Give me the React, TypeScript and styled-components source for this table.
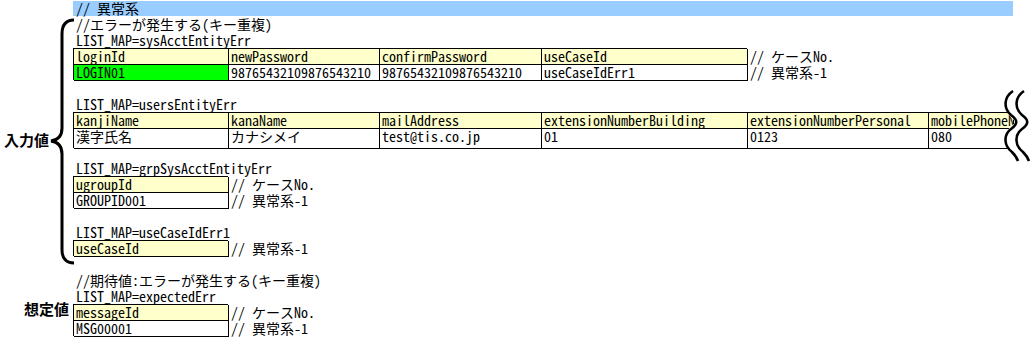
import React from "react";
import styled, { createGlobalStyle } from "styled-components";

const MONO = `"Noto Sans Mono CJK JP", "Noto Sans CJK JP", "DejaVu Sans Mono", monospace`;
const COLS = "73px 155px 151px 162px 206px 181px 85px";

const Global = createGlobalStyle`
  html, body { margin: 0; padding: 0; background: #fff; }
  body { font-family: ${MONO}; }
`;

const Page = styled.div`
  position: relative;
  width: 1033px;
  height: 351px;
  overflow: hidden;
  background: #fff;
  color: #000;
  font-family: ${MONO};
  font-size: 14px;
`;

const Sheet = styled.div`
  display: flex;
  flex-direction: column;
`;

const Row = styled.div`
  display: grid;
  grid-template-columns: ${COLS};
  height: 16px;
`;

const Band = styled.div`
  grid-column: 2 / span 6;
  margin-top: 1px;
  background: #99ccff;
  padding-left: 3px;
  line-height: 15px;
  white-space: nowrap;
`;

const Text = styled.div<{ $col: number }>`
  grid-column: ${(p) => p.$col} / span 1;
  padding-left: 3px;
  line-height: 16px;
  white-space: nowrap;
  min-width: 0;
`;

type Kind = "head" | "data" | "ok";
const FILL: Record<Kind, string> = { head: "#ffffcc", data: "#ffffff", ok: "#00ff00" };

const Cell = styled.div<{ $col: number; $kind: Kind; $clip?: boolean }>`
  grid-column: ${(p) => p.$col} / span 1;
  box-sizing: border-box;
  border-left: 1px solid #000;
  border-top: 1px solid #000;
  box-shadow: 1px 1px 0 #000;
  background: ${(p) => FILL[p.$kind]};
  padding-left: 2px;
  line-height: 15px;
  white-space: nowrap;
  overflow: ${(p) => (p.$clip ? "hidden" : "visible")};
  min-width: 0;
`;

const Label = styled.div<{ $indent: number; $drop: number }>`
  grid-column: 1 / span 1;
  padding-left: ${(p) => p.$indent}px;
  margin-top: ${(p) => p.$drop}px;
  font-family: "Noto Sans CJK JP", sans-serif;
  font-weight: 700;
  font-size: 15px;
  line-height: 16px;
  white-space: nowrap;
`;

const Brace = styled.svg`
  position: absolute;
  left: 40px;
  top: 15px;
  width: 40px;
  height: 255px;
  pointer-events: none;
`;

const Squiggle = styled.svg`
  position: absolute;
  left: 995px;
  top: 86px;
  width: 38px;
  height: 80px;
  pointer-events: none;
`;

const WAVE =
  "M1013 91 C1004 97, 1003 108, 1011 115 C1018 120, 1018 124, 1011 129 C1003 135, 1004 146, 1012 152 C1015 155, 1017 158, 1018 161";

type CellDef = { text: string; kind?: Kind };

const TableRow: React.FC<{ cells: CellDef[]; kind: Kind; note?: string; children?: React.ReactNode }> = ({
  cells,
  kind,
  note,
  children,
}) => (
  <Row>
    {children}
    {cells.map((c, i) => (
      <Cell key={i} $col={2 + i} $kind={c.kind ?? kind} $clip={2 + i === 7}>
        {c.text}
      </Cell>
    ))}
    {note && <Text $col={2 + cells.length}>{note}</Text>}
  </Row>
);

const Line: React.FC<{ text?: string }> = ({ text }) => (
  <Row>{text ? <Text $col={2}>{text}</Text> : null}</Row>
);

const t = (s: string): CellDef => ({ text: s });

export default function App() {
  return (
    <>
      <Global />
      <Page>
        <Sheet>
          <Row>
            <Band>// 異常系</Band>
          </Row>
          <Line text="//エラーが発生する(キー重複)" />
          <Line text="LIST_MAP=sysAcctEntityErr" />
          <TableRow
            kind="head"
            cells={["loginId", "newPassword", "confirmPassword", "useCaseId"].map(t)}
            note="// ケースNo."
          />
          <TableRow
            kind="data"
            cells={[
              { text: "LOGIN01", kind: "ok" },
              t("98765432109876543210"),
              t("98765432109876543210"),
              t("useCaseIdErr1"),
            ]}
            note="// 異常系-1"
          />
          <Line />
          <Line text="LIST_MAP=usersEntityErr" />
          <TableRow
            kind="head"
            cells={[
              "kanjiName",
              "kanaName",
              "mailAddress",
              "extensionNumberBuilding",
              "extensionNumberPersonal",
              "mobilePhoneNumber",
            ].map(t)}
          />
          <TableRow
            kind="data"
            cells={["漢字氏名", "カナシメイ", "test@tis.co.jp", "01", "0123", "080"].map(t)}
          >
            <Label $indent={4} $drop={4}>
              入力値
            </Label>
          </TableRow>
          <Line />
          <Line text="LIST_MAP=grpSysAcctEntityErr" />
          <TableRow kind="head" cells={[t("ugroupId")]} note="// ケースNo." />
          <TableRow kind="data" cells={[t("GROUPID001")]} note="// 異常系-1" />
          <Line />
          <Line text="LIST_MAP=useCaseIdErr1" />
          <TableRow kind="head" cells={[t("useCaseId")]} note="// 異常系-1" />
          <Line />
          <Line text="//期待値:エラーが発生する(キー重複)" />
          <Line text="LIST_MAP=expectedErr" />
          <TableRow kind="head" cells={[t("messageId")]} note="// ケースNo.">
            <Label $indent={24} $drop={-3}>
              想定値
            </Label>
          </TableRow>
          <TableRow kind="data" cells={[t("MSG00001")]} note="// 異常系-1" />
        </Sheet>

        <Brace viewBox="40 15 40 255">
          <path
            d="M74 20 C66 20, 62 25, 62 34 L62 128 C62 136, 58 140, 51 141 C58 142, 62 146, 62 154 L62 250 C62 258, 66 263, 74 263"
            fill="none"
            stroke="#000"
            strokeWidth={3}
          />
        </Brace>

        <Squiggle viewBox="995 86 38 80">
          <path d={WAVE} transform="translate(5.5 0)" fill="none" stroke="#fff" strokeWidth={11} />
          <path d={WAVE} fill="none" stroke="#000" strokeWidth={2.6} />
          <path d={WAVE} transform="translate(11 0)" fill="none" stroke="#000" strokeWidth={2.6} />
        </Squiggle>
      </Page>
    </>
  );
}
